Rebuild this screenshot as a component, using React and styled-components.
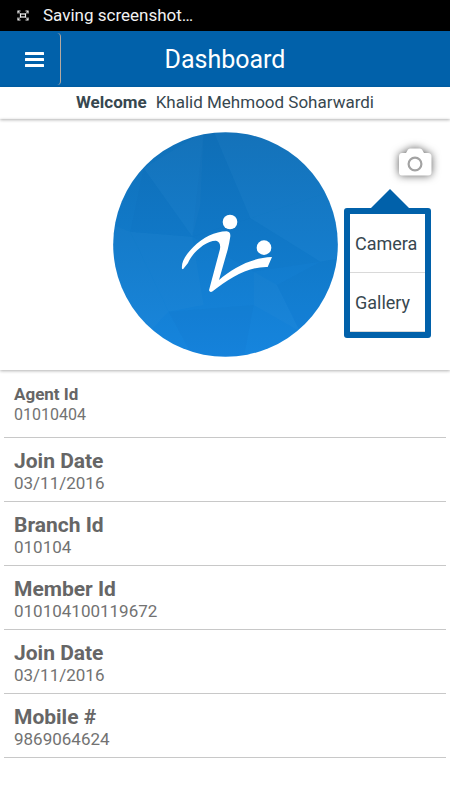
// App.jsx
import React from 'react';
import styled, { createGlobalStyle } from 'styled-components';

const details = [
    { label: 'Agent Id', value: '01010404', small: true },
    { label: 'Join Date', value: '03/11/2016' },
    { label: 'Branch Id', value: '010104' },
    { label: 'Member Id', value: '010104100119672' },
    { label: 'Join Date', value: '03/11/2016' },
    { label: 'Mobile #', value: '9869064624' },
];

function ScreenshotIcon(){
    return(
    <svg width="12" height="11" viewBox="0 0 12 11" fill="none" stroke="#f2f2f2" aria-hidden="true">
        <path d="M1 3.5V1H3.5M8.5 1H11V3.5M11 7.5V10H8.5M3.5 10H1V7.5" strokeWidth="1.2" />
        <rect x="3.5" y="4" width="5" height="3" strokeWidth="1.2" />
        <path d="M1 1L3.5 4M11 1L8.5 4M1 10L3.5 7M11 10L8.5 7" strokeWidth="0.7" />
    </svg>
    );
}

function MenuIcon(){
    return(
    <svg width="19" height="15" viewBox="0 0 19 15" fill="#fff" aria-hidden="true">
        <rect width="19" height="3" rx="0.5" />
        <rect y="6" width="19" height="3" rx="0.5" />
        <rect y="12" width="19" height="3" rx="0.5" />
    </svg>
    );
}

function CameraIcon(){
    return(
    <svg width="34" height="28" viewBox="0 0 34 28" aria-hidden="true">
        <path fill="#fff" d="M4 5H8L10 1.5Q11 0.5 12.5 0.5H21.5Q23 0.5 24 1.5L26 5H30Q33.5 5 33.5 8.5V24.5Q33.5 27.5 30 27.5H4Q1 27.5 1 24.5V8.5Q1 5 4 5Z" />
        <circle cx="17" cy="16" r="6.4" fill="#fff" stroke="#a3a3a3" strokeWidth="2.2" />
    </svg>
    );
}

function Logo(){
    return(
    <svg width="100%" viewBox="38 21 675 675" role="img" aria-label="Profile picture">
        <defs>
            <linearGradient id="sky" x1="0" y1="0" x2="0" y2="1">
                <stop offset="0" stopColor="#1070b8" />
                <stop offset="0.5" stopColor="#117aca" />
                <stop offset="1" stopColor="#1685de" />
            </linearGradient>
            <clipPath id="round">
                <circle cx="375.5" cy="358.5" r="337" />
            </clipPath>
        </defs>
        <g clipPath="url(#round)">
            <rect x="38" y="21" width="675" height="675" fill="url(#sky)" />
            <g fill="#fff" fillOpacity="0.02">
                <path d="M130 130L310 20L300 240L276 335Z" />
                <path d="M340 20L720 20V190L450 280Z" />
                <path d="M450 280L720 190V400L660 410Z" />
                <path d="M38 300L90 320L205 560L130 640H38Z" />
                <path d="M90 320L276 335L310 540L205 560Z" />
                <path d="M460 440L530 480L600 620L460 540Z" />
            </g>
            <g fill="#004f9e" fillOpacity="0.04">
                <path d="M130 130L276 335L90 320Z" />
                <path d="M310 20H340L450 280L276 335Z" />
                <path d="M276 335L450 280L660 410L460 440Z" />
                <path d="M205 560L460 540L430 700H280Z" />
                <path d="M660 410L720 400V600L600 620L530 480Z" />
            </g>
        </g>
        <g fill="#fff">
            <circle cx="389" cy="291" r="22" />
            <circle cx="491" cy="368" r="22" />
            <path d="M245 431C242 410 258 387 279 366C308 338 344 319 379 319Q391 320 390 334Q387 355 382 374L356 465C397 429 453 398 515 396L502 426C444 424 386 460 337 499Q329 504 326 496L359 372Q362 350 347 347C318 346 276 382 263 414L248 433Z" />
        </g>
    </svg>
    );
}

function Detail({ label, value, small }){
    return(
    <Row $small={small}>
        <Label $small={small}>{label}</Label>
        <Value $small={small}>{value}</Value>
    </Row>
    );
}

function App(){
    return(
    <Page>
        <GlobalStyle />
        <StatusBar>
            <ScreenshotIcon />
            Saving screenshot…
        </StatusBar>
        <AppBar>
            <MenuButton type="button" aria-label="Menu">
                <MenuIcon />
            </MenuButton>
            <Title>Dashboard</Title>
        </AppBar>
        <Welcome>
            <strong>Welcome</strong>
            <span>Khalid Mehmood Soharwardi</span>
        </Welcome>
        <Photo>
            <Avatar>
                <Logo />
            </Avatar>
            <CameraButton type="button" aria-label="Change picture">
                <CameraIcon />
            </CameraButton>
            <Popover>
                <PopoverItem type="button">Camera</PopoverItem>
                <PopoverItem type="button">Gallery</PopoverItem>
            </Popover>
        </Photo>
        <Details>
            {details.map((item, i) => <Detail key={i} {...item} />)}
        </Details>
    </Page>
    );
}

export default App;

const GlobalStyle = createGlobalStyle`
    * {
        box-sizing: border-box;
    }
    body {
        margin: 0;
        background: #fff;
        font-family: Roboto, sans-serif;
    }
    button {
        font-family: inherit;
        cursor: pointer;
    }
`;

const Page = styled.div`
    display: flex;
    flex-direction: column;
    min-height: 100vh;
`;

const StatusBar = styled.div`
    display: flex;
    align-items: center;
    gap: 14px;
    height: 31px;
    padding: 0 17px 1px;
    background: #000;
    color: #f2f2f2;
    font-size: 17px;
`;

const AppBar = styled.header`
    display: grid;
    grid-template-columns: 61px 1fr 61px;
    align-items: center;
    height: 56px;
    background: #0161aa;
    color: #fff;
`;

const MenuButton = styled.button`
    display: flex;
    align-items: center;
    height: 52px;
    padding: 0 0 0 25px;
    border: 0;
    border-right: 1px solid #b5a9a0;
    border-radius: 4px;
    background: none;
`;

const Title = styled.h1`
    margin: 0;
    font-size: 25px;
    font-weight: 400;
    text-align: center;
`;

const Welcome = styled.div`
    display: flex;
    justify-content: center;
    align-items: center;
    gap: 9px;
    height: 32px;
    padding-bottom: 3px;
    color: #37474f;
    font-size: 17px;
    box-shadow: 0 1px 3px rgba(0, 0, 0, 0.3);
`;

const Photo = styled.section`
    position: relative;
    display: flex;
    justify-content: center;
    padding: 13px 0;
    box-shadow: 0 1px 3px rgba(0, 0, 0, 0.3);
`;

const Avatar = styled.div`
    display: flex;
    width: 50%;
    max-width: 320px;
`;

const CameraButton = styled.button`
    position: absolute;
    top: 29px;
    right: 18px;
    display: flex;
    padding: 0;
    border: 0;
    background: none;

    svg {
        overflow: visible;
        filter: drop-shadow(0 0 4px rgba(0, 0, 0, 0.65));
    }
`;

const Popover = styled.div`
    position: absolute;
    top: 89px;
    right: 19px;
    width: 87px;
    padding: 6px;
    border-radius: 3px;
    background: #0161aa;

    &::before {
        content: '';
        position: absolute;
        left: 27px;
        bottom: 100%;
        border: 19px solid transparent;
        border-top-width: 0;
        border-bottom-color: #0161aa;
    }
`;

const PopoverItem = styled.button`
    display: block;
    width: 100%;
    height: 59px;
    padding: 0 5px;
    border: 0;
    border-bottom: 1px solid #d9d9d9;
    background: #fff;
    color: #37474f;
    font-size: 18px;
    text-align: left;
`;

const Details = styled.dl`
    margin: 0;
    padding: 2px 4px 0;
`;

const Row = styled.div`
    padding: ${(props) => (props.$small ? '12px 10px' : '11px 10px 7px')};
    border-bottom: 1px solid #c8c8c8;
    color: #666;
`;

const Label = styled.dt`
    font-size: ${(props) => (props.$small ? '17px' : '21px')};
    line-height: ${(props) => (props.$small ? '21px' : '24px')};
    font-weight: 700;
`;

const Value = styled.dd`
    margin: 0;
    color: #727272;
    font-size: ${(props) => (props.$small ? '16px' : '17px')};
    line-height: ${(props) => (props.$small ? '20px' : '21px')};
`;
